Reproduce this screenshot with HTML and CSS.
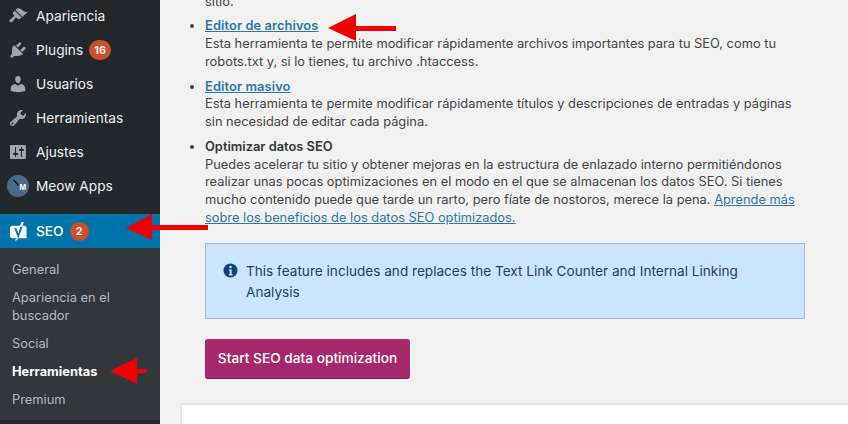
FILE: index.html
```html
<!DOCTYPE html>
<html lang="es">
<head>
<meta charset="utf-8">
<title>SEO Herramientas</title>
<link rel="stylesheet" href="styles.css">
</head>
<body>
<div class="page">
  <nav class="sidebar">
    <ul class="menu">
      <li class="item"><svg class="icon" viewBox="0 0 20 20"><path d="M14.480 11.060L7.410 3.990l1.500-1.500c.500-.560 2.300-.470 3.510.320 1.210.800 1.430 1.280 2.910 2.100 1.180.640 2.450 1.260 4.450.850zm-.710.710L6.700 4.700 4.930 6.470c-.390.390-.390 1.020 0 1.410l1.060 1.060c.390.390.390 1.030 0 1.420-.600.600-1.430 1.110-2.210 1.690-.350.260-.700.530-1.010.840C1.430 13.710.960 14.900 1.850 15.800c.890.890 2.080.430 3.070-.560.290-.290.560-.650.840-1.010.570-.790 1.090-1.620 1.690-2.210.390-.390 1.030-.390 1.420 0l1.060 1.060c.390.390 1.020.390 1.410 0z"/></svg><span>Apariencia</span></li>
      <li class="item"><svg class="icon" viewBox="0 0 20 20"><path d="M13.110 4.360L9.870 7.600 8 5.730l3.240-3.240c.350-.340 1.050-.200 1.560.320.520.510.660 1.210.310 1.550zm-8 1.770l.910-1.120 9.010 9.010-1.190.840c-.710.710-2.630 1.160-3.820 1.160H6.140L4.900 17.260c-.590.590-1.540.590-2.120 0-.590-.580-.590-1.530 0-2.120l1.240-1.240v-3.880c0-1.130.400-3.190 1.090-3.890zm7.260 3.970l3.240-3.240c.340-.350 1.040-.210 1.550.310.520.510.660 1.210.310 1.550l-3.240 3.250z"/></svg><span>Plugins</span><b class="badge">16</b></li>
      <li class="item"><svg class="icon" viewBox="0 0 20 20"><path d="M10 9.250c-2.270 0-2.730-3.440-2.730-3.440C7 4.020 7.820 2 9.970 2c2.160 0 2.980 2.020 2.710 3.810 0 0-.410 3.440-2.680 3.440zm0 2.570L12.720 10c2.390 0 4.520 2.330 4.520 4.530v2.490s-3.650 1.130-7.240 1.130c-3.650 0-7.240-1.130-7.240-1.130v-2.490c0-2.250 1.940-4.480 4.470-4.480z"/></svg><span>Usuarios</span></li>
      <li class="item"><svg class="icon" viewBox="0 0 20 20"><path d="M16.680 9.770c-1.340 1.340-3.300 1.670-4.950.990l-5.410 6.520c-.990.990-2.590.990-3.580 0s-.990-2.590 0-3.570l6.520-5.420c-.680-1.650-.350-3.610.990-4.950 1.280-1.280 3.120-1.620 4.720-1.060l-2.890 2.890 2.820 2.820 2.860-2.870c.530 1.580.180 3.390-1.080 4.650zM3.810 16.210c.400.390 1.040.390 1.430 0 .400-.400.400-1.040 0-1.430-.390-.400-1.030-.400-1.430 0-.390.390-.390 1.030 0 1.430z"/></svg><span>Herramientas</span></li>
      <li class="item"><svg class="icon" viewBox="0 0 20 20"><path d="M18 16V4c0-.550-.450-1-1-1H3c-.550 0-1 .450-1 1v12c0 .550.450 1 1 1h14c.550 0 1-.450 1-1zM8 11h1c.550 0 1 .450 1 1s-.450 1-1 1H8v1.500c0 .280-.220.500-.500.500s-.500-.220-.500-.500V13H6c-.550 0-1-.450-1-1s.450-1 1-1h1V5.500c0-.280.220-.500.500-.500s.500.220.500.500V11zm5-2h-1c-.550 0-1-.450-1-1s.450-1 1-1h1V5.500c0-.280.220-.500.500-.500s.500.220.500.500V7h1c.550 0 1 .450 1 1s-.450 1-1 1h-1v5.500c0 .280-.220.500-.500.500s-.500-.220-.500-.500V9z"/></svg><span>Ajustes</span></li>
      <li class="item"><span class="avatar"><svg viewBox="0 0 22 22"><path class="avatar-quill" d="M6 5.500l1.300-1 5 5.500-1.300 1z"/></svg><em>M</em></span><span>Meow Apps</span></li>
    </ul>
    <div class="seo">
      <svg class="yoast" viewBox="0 0 20 22"><path d="M3.500 5H16c1.500 0 2.500 1 2.500 2.500V18H3.500C2 18 1 17 1 15.500v-8C1 6 2 5 3.500 5z"/><path class="yoast-y" d="M5.500 7.500H7.800l2 5.500 2.400-7.500h2.200l-4.400 12.200c-.5 1.400-1.300 2.300-2.800 2.700v-1.600c.9-.3 1.300-.8 1.500-1.500l.3-1z"/><path d="M13 1h2.600l-1.500 4.800h-2.500z"/><path d="M6.600 19.300c1-.2 1.700-.8 2-1.700v-.6h1.200l-.5 1.300c-.4 1.200-1.200 2-2.700 2.500z"/></svg>
      <span>SEO</span><b class="badge badge-seo">2</b>
    </div>
    <ul class="submenu">
      <li>General</li>
      <li>Apariencia en el buscador</li>
      <li>Social</li>
      <li class="current">Herramientas</li>
      <li>Premium</li>
    </ul>
  </nav>
  <main class="content">
    <div class="clip-line">sitio.</div>
    <ul class="tools">
      <li><a href="#">Editor de archivos</a><br>Esta herramienta te permite modificar rápidamente archivos importantes para tu SEO, como tu robots.txt y, si lo tienes, tu archivo .htaccess.</li>
      <li><a href="#">Editor masivo</a><br>Esta herramienta te permite modificar rápidamente títulos y descripciones de entradas y páginas sin necesidad de editar cada página.</li>
      <li><strong>Optimizar datos SEO</strong><br>Puedes acelerar tu sitio y obtener mejoras en la estructura de enlazado interno permitiéndonos realizar unas pocas optimizaciones en el modo en el que se almacenan los datos SEO. Si tienes mucho contenido puede que tarde un rarto, pero fíate de nostoros, merece la pena. <a class="plain" href="#">Aprende más sobre los beneficios de los datos SEO optimizados.</a></li>
    </ul>
    <div class="notice">
      <svg class="info" viewBox="0 0 16 16"><circle cx="8" cy="8" r="7.500"/><circle class="glyph" cx="8" cy="4.300" r="1.400"/><path class="glyph" d="M6.200 7h3v5h1v1.300H6.200V12h1v-3.700h-1z"/></svg>
      <p>This feature includes and replaces the Text Link Counter and Internal Linking Analysis</p>
    </div>
    <button class="primary" type="button">Start SEO data optimization</button>
    <div class="card"></div>
  </main>
</div>
<svg class="arrow arrow-file" viewBox="0 0 68 27"><path d="M0 14 28 0v12h40v5H28v10z"/></svg>
<svg class="arrow arrow-seo" viewBox="0 0 82 26"><path d="M0 14 26 0v11h56v5H26v10z"/></svg>
<svg class="arrow arrow-tools" viewBox="0 0 37 26"><path d="M0 13 27 0v11h10v4H27v11z"/></svg>
</body>
</html>
```

FILE: styles.css
```css
* { box-sizing: border-box; }
html, body { margin: 0; height: 100%; }
body {
  width: 848px;
  height: 424px;
  overflow: hidden;
  position: relative;
  background: #f1f1f1;
  font-family: Inter, "Liberation Sans", sans-serif;
  font-size: 12.850px;
  color: #444;
}
ul { list-style: none; margin: 0; padding: 0; }
.page { display: flex; height: 424px; overflow: hidden; }
.sidebar {
  width: 160px;
  flex: none;
  background: #23282d;
  display: flex;
  flex-direction: column;
}
.menu { margin-top: -1px; padding-bottom: 11px; }
.item {
  height: 34px;
  display: flex;
  align-items: center;
  color: #f0f0f1;
  font-size: 13.700px;
  padding-left: 8px;
}
.icon { width: 20px; height: 20px; fill: #a0a5aa; flex: none; margin-right: 8px; }
.badge {
  margin-left: 6px;
  width: 22px;
  height: 20px;
  border-radius: 10px;
  background: #c9502a;
  color: #fff;
  font-size: 11px;
  font-weight: 600;
  display: flex;
  align-items: center;
  justify-content: center;
}
.avatar {
  width: 22px;
  height: 22px;
  margin: 0 7px 0 -1px;
  flex: none;
  border-radius: 50%;
  background: #4a6a8a;
  position: relative;
  display: block;
}
.avatar svg { width: 22px; height: 22px; display: block; }
.avatar-quill { fill: #14171a; }
.avatar em {
  position: absolute;
  right: 3px;
  top: 8px;
  font-size: 7px;
  line-height: 10px;
  font-style: normal;
  font-weight: 700;
  color: #fff;
}
.seo {
  height: 34px;
  background: #0073aa;
  color: #fff;
  display: flex;
  align-items: center;
  font-size: 13.700px;
  font-weight: 500;
  padding-left: 9px;
}
.yoast { width: 19px; height: 21px; fill: #fff; flex: none; margin-right: 8px; }
.yoast-y { fill: #0073aa; }
.badge-seo { width: 19px; height: 19px; margin-left: 6px; }
.submenu {
  background: #32373c;
  padding: 8px 12px 9px;
  height: 172px;
  color: #b4b9be;
  font-size: 12.850px;
  line-height: 18px;
}
.submenu li { padding: 5px 0; }
.submenu .current { color: #fff; font-weight: 700; }
.content { flex: 1; padding: 0 0 0 45px; line-height: 17.700px; }
.clip-line { margin-top: -7px; margin-bottom: 6.500px; }
.tools { list-style: disc; width: 600px; }
.tools li { margin-bottom: 7.200px; }
.tools a { color: #2e77a3; font-weight: 600; letter-spacing: .1px; }
.tools a.plain { font-weight: 400; letter-spacing: 0; }
.tools strong { font-weight: 600; color: #32373c; }
.notice {
  width: 600px;
  height: 76px;
  margin-top: 17px;
  background: #cce5ff;
  border: 1px solid #a3b8cf;
  padding: 17px 50px 0 17px;
  display: flex;
  gap: 8px;
  color: #1d3f66;
  font-size: 13.600px;
  line-height: 21px;
}
.notice p { margin: 0; }
.info { width: 15px; height: 15px; flex: none; fill: #0f4583; margin-top: 2px; }
.info .glyph { fill: #cce5ff; }
.primary {
  display: block;
  margin-top: 20px;
  width: 205px;
  height: 40px;
  padding: 0 0 2px;
  background: #a4286a;
  border: 0;
  border-bottom: 1px solid #7c1f50;
  border-radius: 3px;
  color: #fff;
  font: 500 13.700px Inter, "Liberation Sans", sans-serif;
}
.card {
  margin: 26px 0 0 -23px;
  width: 690px;
  height: 60px;
  background: #fff;
  box-shadow: 0 0 3px rgba(0,0,0,.2);
}
.arrow { position: absolute; fill: #f00000; }
.arrow-file { left: 328px; top: 14px; width: 68px; height: 27px; }
.arrow-seo { left: 126px; top: 214px; width: 82px; height: 26px; }
.arrow-tools { left: 110px; top: 358px; width: 37px; height: 26px; }
```
